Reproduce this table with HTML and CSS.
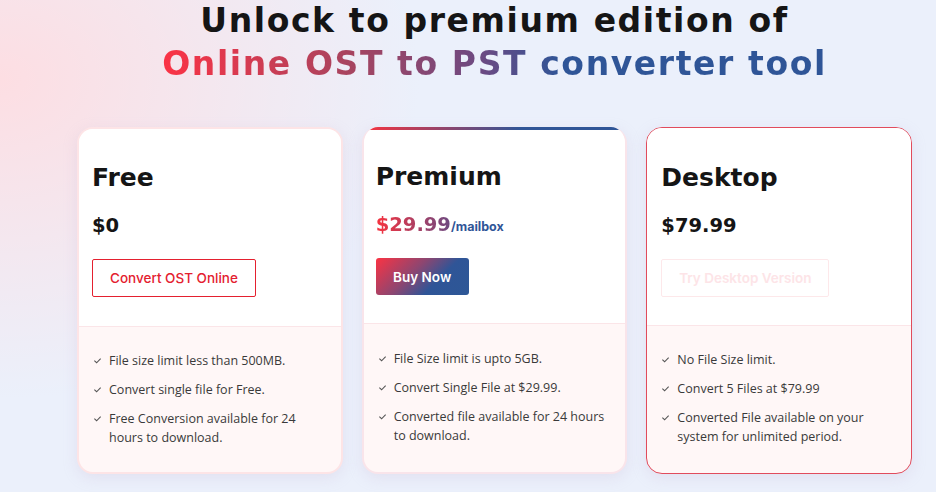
FILE: index.html
```html
<!DOCTYPE html>
<html lang="en">
<head>
<meta charset="utf-8">
<title>Pricing</title>
<link rel="stylesheet" href="styles.css">
</head>
<body>
<div class="page">
  <div class="wrap">
    <h1 class="headline">
      <span class="line1">Unlock to premium edition of</span>
      <span class="line2">Online OST to PST converter tool</span>
    </h1>
    <div class="cards">
      <div class="card card-free">
        <div class="card-top">
          <h2 class="plan">Free</h2>
          <div class="price">$0</div>
          <a class="btn btn-outline" href="#">Convert OST Online</a>
        </div>
        <ul class="features">
          <li><span class="tick"><svg viewBox="0 0 10 10"><path d="M1.5 5.2 L4 7.5 L8.5 2.8"/></svg></span><span>File size limit less than 500MB.</span></li>
          <li><span class="tick"><svg viewBox="0 0 10 10"><path d="M1.5 5.2 L4 7.5 L8.5 2.8"/></svg></span><span>Convert single file for Free.</span></li>
          <li><span class="tick"><svg viewBox="0 0 10 10"><path d="M1.5 5.2 L4 7.5 L8.5 2.8"/></svg></span><span>Free Conversion available for 24 hours to download.</span></li>
        </ul>
      </div>
      <div class="card card-premium">
        <div class="card-top">
          <h2 class="plan">Premium</h2>
          <div class="price"><span class="grad-price">$29.99</span><span class="per">/mailbox</span></div>
          <a class="btn btn-grad" href="#">Buy Now</a>
        </div>
        <ul class="features">
          <li><span class="tick"><svg viewBox="0 0 10 10"><path d="M1.5 5.2 L4 7.5 L8.5 2.8"/></svg></span><span>File Size limit is upto 5GB.</span></li>
          <li><span class="tick"><svg viewBox="0 0 10 10"><path d="M1.5 5.2 L4 7.5 L8.5 2.8"/></svg></span><span>Convert Single File at $29.99.</span></li>
          <li><span class="tick"><svg viewBox="0 0 10 10"><path d="M1.5 5.2 L4 7.5 L8.5 2.8"/></svg></span><span>Converted file available for 24 hours to download.</span></li>
        </ul>
      </div>
      <div class="card card-desktop">
        <div class="card-top">
          <h2 class="plan">Desktop</h2>
          <div class="price">$79.99</div>
          <a class="btn btn-faded" href="#">Try Desktop Version</a>
        </div>
        <ul class="features">
          <li><span class="tick"><svg viewBox="0 0 10 10"><path d="M1.5 5.2 L4 7.5 L8.5 2.8"/></svg></span><span>No File Size limit.</span></li>
          <li><span class="tick"><svg viewBox="0 0 10 10"><path d="M1.5 5.2 L4 7.5 L8.5 2.8"/></svg></span><span>Convert 5 Files at $79.99</span></li>
          <li><span class="tick"><svg viewBox="0 0 10 10"><path d="M1.5 5.2 L4 7.5 L8.5 2.8"/></svg></span><span>Converted File available on your system for unlimited period.</span></li>
        </ul>
      </div>
    </div>
  </div>
</div>
</body>
</html>
```
FILE: styles.css
```css
* { box-sizing: border-box; }
html, body { margin: 0; padding: 0; }
body {
  font-family: "Open Sans", "Liberation Sans", sans-serif;
  width: 936px;
  height: 493px;
  overflow: hidden;
}
.page {
  width: 936px;
  height: 493px;
  background:
    radial-gradient(ellipse 420px 320px at 0px 80px, rgba(255, 220, 224, 0.9), rgba(255, 220, 224, 0) 100%),
    #ebf0fb;
  padding-left: 77px;
}
.wrap { width: 835px; }
.headline {
  margin: -1px 0 0 0;
  font-family: "DejaVu Sans", "Liberation Sans", sans-serif;
  font-weight: 700;
  font-size: 33px;
  line-height: 43px;
  letter-spacing: 1.6px;
  text-align: center;
  display: flex;
  flex-direction: column;
  align-items: center;
}
.line1 { color: #151515; }
.line2 {
  background: linear-gradient(90deg, #fb3345 0%, #a8445f 28%, #6c4a82 48%, #2f5597 60%, #2f5597 100%);
  -webkit-background-clip: text;
  background-clip: text;
  color: transparent;
}
.cards {
  display: flex;
  gap: 19px;
  margin-top: 42px;
}
.card {
  width: 266px;
  height: 347px;
  border-radius: 16px;
  background: #fff7f7;
  border: 2px solid #fde4e6;
  box-shadow: 0 4px 14px rgba(200, 180, 210, 0.25);
  overflow: hidden;
  display: flex;
  flex-direction: column;
}
.card-premium {
  border: 2px solid #f9e4ea;
  border-top: none;
  position: relative;
}
.card-premium::before {
  content: "";
  position: absolute;
  left: 0; right: 0; top: 0;
  height: 3px;
  background: linear-gradient(90deg, #f7333f, #2f5597 60%);
}
.card-desktop {
  border: 1px solid #e14b5c;
}
.card-top {
  background: #fff;
  height: 198px;
  padding: 34px 13px 0 13px;
  border-bottom: 1px solid #fbe5e8;
  flex: none;
}
.card-premium .card-top { height: 197px; padding-top: 35px; padding-left: 12px; }
.card-desktop .card-top { height: 198px; padding-top: 35px; padding-left: 14px; }
.plan {
  margin: 0;
  font-family: "DejaVu Sans", "Liberation Sans", sans-serif;
  font-weight: 700;
  font-size: 25px;
  line-height: 30px;
  color: #151515;
}
.price {
  margin-top: 20px;
  font-family: "DejaVu Sans", "Liberation Sans", sans-serif;
  font-weight: 700;
  font-size: 19.5px;
  line-height: 26px;
  color: #151515;
  height: 26px;
}
.grad-price {
  background: linear-gradient(90deg, #f7333f, #6c4a82);
  -webkit-background-clip: text;
  background-clip: text;
  color: transparent;
}
.per {
  font-family: "Inter", "Liberation Sans", sans-serif;
  font-size: 12.5px;
  font-weight: 700;
  color: #2f5597;
}
.btn {
  display: inline-flex;
  align-items: center;
  justify-content: center;
  height: 38px;
  margin-top: 20px;
  font-family: "Inter", "Liberation Sans", sans-serif;
  font-size: 13.5px;
  text-decoration: none;
  border-radius: 2px;
}
.btn-outline {
  width: 164px;
  border: 1px solid #e4202f;
  color: #e4202f;
  font-weight: 500;
}
.btn-grad {
  width: 93px;
  height: 37px;
  color: #fff;
  font-weight: 600;
  border-radius: 3px;
  background: linear-gradient(135deg, #fb3343 0%, #8c4671 40%, #2f5597 65%, #2d5796 100%);
}
.btn-faded {
  width: 168px;
  border: 1px solid #fde8ea;
  color: #fde4e7;
  font-weight: 600;
}
.features {
  list-style: none;
  margin: 0;
  padding: 24px 12px 0 14px;
  font-size: 12.5px;
  line-height: 19px;
  color: #3a3a3a;
}
.card-premium .features { padding-top: 25px; }
.features li {
  display: flex;
  gap: 6px;
  margin-bottom: 10px;
}
.tick {
  flex: none;
  width: 10px;
  height: 19px;
  display: flex;
  align-items: center;
}
.tick svg {
  width: 9px;
  height: 9px;
  fill: none;
  stroke: #555;
  stroke-width: 1.2;
}
```
